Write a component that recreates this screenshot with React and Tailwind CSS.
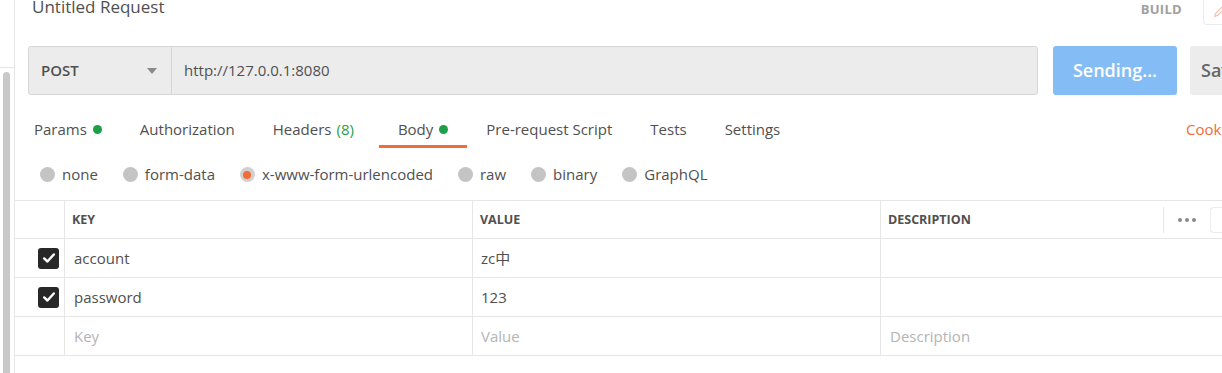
import React from 'react';

const tabs = [
    { label: 'Params', dot: true },
    { label: 'Authorization' },
    { label: 'Headers', count: '(8)' },
    { label: 'Body', dot: true, active: true },
    { label: 'Pre-request Script' },
    { label: 'Tests' },
    { label: 'Settings' },
];

const modes = ['none', 'form-data', 'x-www-form-urlencoded', 'raw', 'binary', 'GraphQL'];

const rows = [
    { key: 'account', value: 'zc中' },
    { key: 'password', value: '123' },
];

const Check = () => (
    <span className="w-[21px] h-[21px] rounded-[3px] bg-[#282828] flex items-center justify-center">
        <svg width="14" height="14" viewBox="0 0 16 16" fill="none">
            <path d="M2.5 8.5 L6.2 12 L13.5 4" stroke="#fff" strokeWidth="2.8" strokeLinecap="round" strokeLinejoin="round" />
        </svg>
    </span>
);

const App = () => {
    return (
        <div className="w-[1222px] h-[373px] overflow-hidden bg-white flex text-[#505050]" style={{ fontFamily: '"Open Sans", "Noto Sans CJK SC", sans-serif' }}>
            {/* left strip with scrollbar */}
            <div className="w-[15px] shrink-0 border-r border-[#e6e6e6] flex flex-col">
                <div className="h-[68px] border-b border-[#e6e6e6]" />
                <div className="mt-[4px] ml-[3px] w-[7px] flex-1 rounded-t-[4px] bg-[#c8c8c8]" />
            </div>

            <div className="flex-1 flex flex-col min-w-0 overflow-hidden">
                {/* title row */}
                <div className="h-[30px] flex items-start pl-[17px] mt-[-5px]">
                    <div className="text-[17px] leading-[24px] text-[#505050]">Untitled Request</div>
                    <div className="ml-auto mt-[5px] text-[13px] font-bold tracking-[0.3px] text-[#a0a0a0]">BUILD</div>
                    <div className="ml-[21px] mt-[-4px] w-[19px] h-[34px] rounded-l-[4px] border-l border-t border-b border-[#ececec] flex items-center justify-end shrink-0 overflow-hidden">
                        <svg className="mr-[-4px] mt-[6px]" width="13" height="13" viewBox="0 0 16 16" fill="none">
                            <path d="M2 14 L3 10.5 L11 2.5 L13.5 5 L5.5 13 Z" stroke="#f7b8a2" strokeWidth="1.3" strokeLinejoin="round" />
                        </svg>
                    </div>
                </div>

                {/* url row */}
                <div className="mt-[21px] h-[49px] flex pl-[13px] shrink-0">
                    <div className="w-[1010px] shrink-0 flex rounded-[3px] border border-[#d6d6d6] bg-[#ececec]">
                        <div className="w-[143px] shrink-0 border-r border-[#d6d6d6] flex items-center pl-[12px] pr-[14px]">
                            <span className="text-[15px] font-semibold text-[#505050]">POST</span>
                            <svg className="ml-auto" width="10" height="6" viewBox="0 0 10 6">
                                <path d="M0 0 H10 L5 6 Z" fill="#8a8a8a" />
                            </svg>
                        </div>
                        <div className="flex-1 flex items-center pl-[12px] text-[15px] text-[#505050]">http://127.0.0.1:8080</div>
                    </div>
                    <button className="ml-[15px] w-[124px] shrink-0 rounded-[3px] bg-[#84bdf5] text-white text-[18px] font-semibold">Sending...</button>
                    <button className="ml-[13px] w-[60px] shrink-0 rounded-[3px] bg-[#ececec] text-[#666] text-[18px] font-semibold text-left pl-[11px]">Save</button>
                </div>

                {/* tabs */}
                <div className="mt-[14px] h-[40px] flex items-stretch shrink-0">
                    {tabs.map((t) => (
                        <div key={t.label} className={`relative flex items-center text-[15px] text-[#505050] whitespace-nowrap ${t.count ? 'pl-[19px] pr-[25px]' : 'px-[19px]'}`}>
                            <span>{t.label}</span>
                            {t.count && <span className="ml-[5px] text-[#26a14a]">{t.count}</span>}
                            {t.dot && <span className="ml-[6px] w-[9px] h-[9px] rounded-full bg-[#1e9e46]" />}
                            {t.active && <span className="absolute left-0 right-0 bottom-[1px] h-[3px] bg-[#f26b3a]" />}
                        </div>
                    ))}
                    <div className="ml-auto flex items-center text-[15px] text-[#f26b3a] whitespace-nowrap w-[36px] shrink-0 overflow-hidden">Cookies</div>
                </div>

                {/* body modes */}
                <div className="h-[51px] flex items-center pl-[25px] shrink-0">
                    {modes.map((m, i) => (
                        <div key={m} className="flex items-center mr-[25px] whitespace-nowrap">
                            {i === 2 ? (
                                <span className="w-[15px] h-[15px] rounded-full bg-[#d0d0d0] flex items-center justify-center">
                                    <span className="w-[8px] h-[8px] rounded-full bg-[#f26b3a]" />
                                </span>
                            ) : (
                                <span className="w-[15px] h-[15px] rounded-full bg-[#c4c4c4]" />
                            )}
                            <span className="ml-[7px] text-[15px] text-[#505050]">{m}</span>
                        </div>
                    ))}
                </div>

                {/* table */}
                <div className="border-t border-[#e6e6e6] text-[15px]">
                    <div className="h-[38px] flex border-b border-[#e6e6e6] text-[12.5px] font-bold text-[#505050]">
                        <div className="w-[50px] shrink-0 border-r border-[#e6e6e6]" />
                        <div className="w-[408px] shrink-0 border-r border-[#e6e6e6] flex items-center pl-[7px] pt-[2px]">KEY</div>
                        <div className="w-[408px] shrink-0 border-r border-[#e6e6e6] flex items-center pl-[7px] pt-[2px]">VALUE</div>
                        <div className="flex-1 flex items-center pl-[7px]">
                            <span className="pt-[2px]">DESCRIPTION</span>
                            <div className="ml-auto h-[26px] border-l border-[#e6e6e6] w-[47px] flex items-center justify-center gap-[3px]">
                                <span className="w-[4px] h-[4px] rounded-full bg-[#8a8a8a]" />
                                <span className="w-[4px] h-[4px] rounded-full bg-[#8a8a8a]" />
                                <span className="w-[4px] h-[4px] rounded-full bg-[#8a8a8a]" />
                            </div>
                            <div className="h-[26px] w-[12px] border-l border-t border-b border-[#ececec] rounded-l-[4px]" />
                        </div>
                    </div>
                    {rows.map((r) => (
                        <div key={r.key} className="h-[39px] flex border-b border-[#e6e6e6]">
                            <div className="w-[50px] shrink-0 border-r border-[#e6e6e6] flex items-center pl-[23px]">
                                <Check />
                            </div>
                            <div className="w-[408px] shrink-0 border-r border-[#e6e6e6] flex items-center pl-[9px]">{r.key}</div>
                            <div className="w-[408px] shrink-0 border-r border-[#e6e6e6] flex items-center pl-[8px]">{r.value}</div>
                            <div className="flex-1" />
                        </div>
                    ))}
                    <div className="h-[39px] flex border-b border-[#e6e6e6] text-[#b4b4b4]">
                        <div className="w-[50px] shrink-0 border-r border-[#e6e6e6]" />
                        <div className="w-[408px] shrink-0 border-r border-[#e6e6e6] flex items-center pl-[9px]">Key</div>
                        <div className="w-[408px] shrink-0 border-r border-[#e6e6e6] flex items-center pl-[8px]">Value</div>
                        <div className="flex-1 flex items-center pl-[9px]">Description</div>
                    </div>
                </div>
            </div>
        </div>
    );
};

export default App;
